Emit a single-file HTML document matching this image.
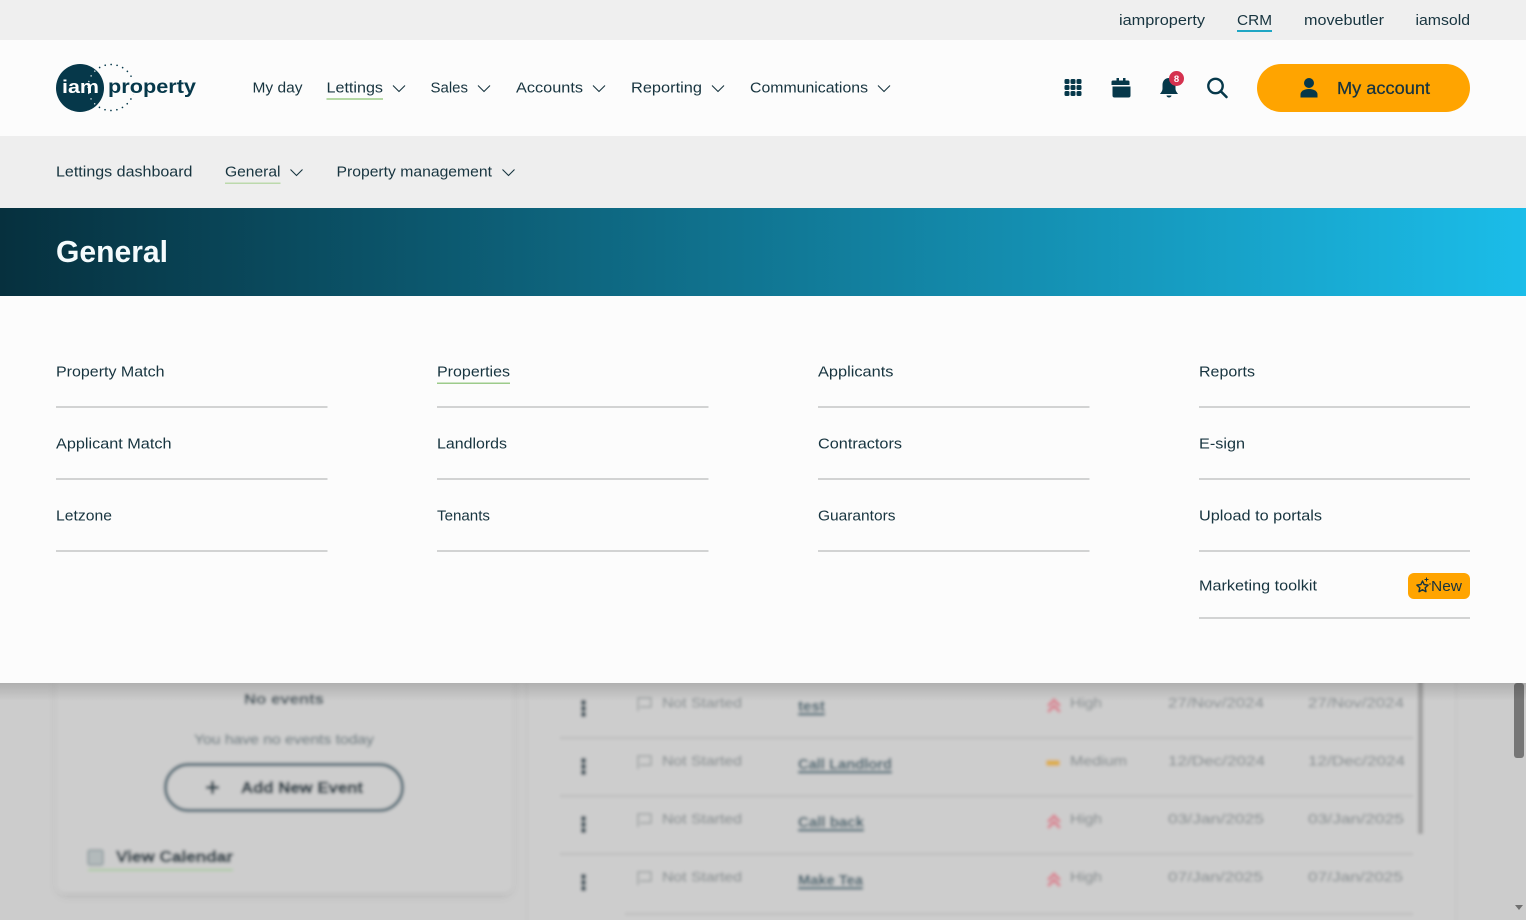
<!DOCTYPE html>
<html lang="en">
<head>
<meta charset="utf-8">
<title>General - iamproperty</title>
<style>
html,body{margin:0;padding:0;width:1526px;height:920px;overflow:hidden;background:#ccc}
svg{display:block}
text{font-family:"Liberation Sans",sans-serif;font-size:15px;fill:#17343f}
.m{font-size:15px}
.chev{fill:none;stroke:#17343f;stroke-width:1.1}
.rule{fill:#d2d3d3}
</style>
</head>
<body>
<svg width="1526" height="920" viewBox="0 0 1526 920" xmlns="http://www.w3.org/2000/svg">
<defs>
<linearGradient id="g" x1="0" x2="1" y1="0" y2="0"><stop offset="0" stop-color="#06303e"/><stop offset="1" stop-color="#1bbde9"/></linearGradient>
<linearGradient id="sh" x1="0" x2="0" y1="0" y2="1"><stop offset="0" stop-color="#000" stop-opacity=".14"/><stop offset="1" stop-color="#000" stop-opacity="0"/></linearGradient>
<filter id="b" x="-5%" y="-5%" width="110%" height="110%"><feGaussianBlur stdDeviation="1.5"/></filter>
<filter id="cs" x="-10%" y="-10%" width="120%" height="120%"><feGaussianBlur stdDeviation="5"/></filter>
<clipPath id="inC"><circle cx="80" cy="88" r="24"/></clipPath>
<clipPath id="outC"><path clip-rule="evenodd" d="M56 50h100v76H56zM56 88a24 24 0 1 0 48 0a24 24 0 1 0-48 0z"/></clipPath>
</defs>

<!-- blurred page behind the menu -->
<rect width="1526" height="920" fill="#cccccc"/>
<g filter="url(#b)">
  <rect x="58" y="660" width="453" height="235" rx="8" fill="#000" opacity=".13" filter="url(#cs)"/>
  <rect x="57" y="660" width="455" height="232" rx="8" fill="#cdcdcd"/>
  <rect x="528" y="660" width="928" height="270" fill="#cdcdcd"/>
  <rect x="1455" y="660" width="2" height="270" fill="#c6c6c6"/>
  <rect x="526" y="660" width="2" height="270" fill="#c6c6c6"/>

  <text x="244" y="704" textLength="80" lengthAdjust="spacingAndGlyphs" font-weight="700" style="font-size:15px;fill:#223f4b">No events</text>
  <text x="194" y="744" textLength="180" lengthAdjust="spacingAndGlyphs" style="font-size:14px;fill:#4f666e">You have no events today</text>
  <rect x="165.500" y="764.500" width="237" height="46" rx="23" fill="none" stroke="#4f6974" stroke-width="3.200"/>
  <path d="M206 787.500h13M212.500 781v13" stroke="#1c3d4a" stroke-width="3" fill="none"/>
  <text x="241" y="793" textLength="122" lengthAdjust="spacingAndGlyphs" font-weight="700" style="font-size:16px;fill:#15323e;stroke:#15323e;stroke-width:.5">Add New Event</text>
  <rect x="88" y="850" width="15" height="15" rx="2" fill="#b3babb" stroke="#8b9a9e" stroke-width="1.500"/>
  <text x="116" y="862" textLength="117" lengthAdjust="spacingAndGlyphs" font-weight="700" style="font-size:16px;fill:#15323e;stroke:#15323e;stroke-width:.5">View Calendar</text>
  <rect x="88" y="869" width="145" height="2" fill="#a9cb9d"/>

  <!-- table -->
  <g fill="#bcbcbc">
    <rect x="560" y="737" width="853" height="2"/>
    <rect x="560" y="795" width="853" height="2"/>
    <rect x="560" y="853" width="853" height="2"/>
    <rect x="625" y="913" width="788" height="2"/>
  </g>
  <g fill="#22434f">
    <rect x="581" y="700" width="5" height="5" rx="2"/><rect x="581" y="706" width="5" height="5" rx="2"/><rect x="581" y="712" width="5" height="5" rx="2"/>
    <rect x="581" y="758" width="5" height="5" rx="2"/><rect x="581" y="764" width="5" height="5" rx="2"/><rect x="581" y="770" width="5" height="5" rx="2"/>
    <rect x="581" y="816" width="5" height="5" rx="2"/><rect x="581" y="822" width="5" height="5" rx="2"/><rect x="581" y="828" width="5" height="5" rx="2"/>
    <rect x="581" y="874" width="5" height="5" rx="2"/><rect x="581" y="880" width="5" height="5" rx="2"/><rect x="581" y="886" width="5" height="5" rx="2"/>
  </g>
  <g fill="none" stroke="#9a9fa0" stroke-width="1.500">
    <path d="M638 711v-13h13v9h-11"/><path d="M638 769v-13h13v9h-11"/><path d="M638 827v-13h13v9h-11"/><path d="M638 885v-13h13v9h-11"/>
  </g>
  <text x="662" y="707.500" textLength="80" lengthAdjust="spacingAndGlyphs" style="font-size:14px;fill:#7c8487">Not Started</text>
  <text x="662" y="765.500" textLength="80" lengthAdjust="spacingAndGlyphs" style="font-size:14px;fill:#7c8487">Not Started</text>
  <text x="662" y="823.500" textLength="80" lengthAdjust="spacingAndGlyphs" style="font-size:14px;fill:#7c8487">Not Started</text>
  <text x="662" y="881.500" textLength="80" lengthAdjust="spacingAndGlyphs" style="font-size:14px;fill:#7c8487">Not Started</text>

  <text x="798" y="711" textLength="27" lengthAdjust="spacingAndGlyphs" font-weight="700" style="font-size:15px;fill:#1f4f5f">test</text>
  <rect x="798" y="713" width="27" height="2.500" fill="#2f6070"/>
  <text x="798" y="769" textLength="94" lengthAdjust="spacingAndGlyphs" font-weight="700" style="font-size:15px;fill:#1f4f5f">Call Landlord</text>
  <rect x="798" y="771" width="94" height="2.500" fill="#2f6070"/>
  <text x="798" y="827" textLength="66" lengthAdjust="spacingAndGlyphs" font-weight="700" style="font-size:15px;fill:#1f4f5f">Call back</text>
  <rect x="798" y="829" width="66" height="2.500" fill="#2f6070"/>
  <text x="798" y="885" textLength="65" lengthAdjust="spacingAndGlyphs" font-weight="700" style="font-size:15px;fill:#1f4f5f">Make Tea</text>
  <rect x="798" y="887" width="65" height="2.500" fill="#2f6070"/>

  <g fill="none" stroke="#d9808f" stroke-width="3">
    <path d="M1048 706l6-6 6 6M1048 712l6-6 6 6"/>
    <path d="M1048 822l6-6 6 6M1048 828l6-6 6 6"/>
    <path d="M1048 880l6-6 6 6M1048 886l6-6 6 6"/>
  </g>
  <rect x="1046" y="760" width="14" height="6" rx="2" fill="#dcae4c"/>
  <text x="1070" y="707.500" textLength="32" lengthAdjust="spacingAndGlyphs" style="font-size:14px;fill:#7c8487">High</text>
  <text x="1070" y="765.500" textLength="57" lengthAdjust="spacingAndGlyphs" style="font-size:14px;fill:#7c8487">Medium</text>
  <text x="1070" y="823.500" textLength="32" lengthAdjust="spacingAndGlyphs" style="font-size:14px;fill:#7c8487">High</text>
  <text x="1070" y="881.500" textLength="32" lengthAdjust="spacingAndGlyphs" style="font-size:14px;fill:#7c8487">High</text>

  <text x="1168" y="707.500" textLength="96" lengthAdjust="spacingAndGlyphs" style="font-size:14px;fill:#7c8487">27/Nov/2024</text>
  <text x="1308" y="707.500" textLength="96" lengthAdjust="spacingAndGlyphs" style="font-size:14px;fill:#7c8487">27/Nov/2024</text>
  <text x="1168" y="765.500" textLength="97" lengthAdjust="spacingAndGlyphs" style="font-size:14px;fill:#7c8487">12/Dec/2024</text>
  <text x="1308" y="765.500" textLength="97" lengthAdjust="spacingAndGlyphs" style="font-size:14px;fill:#7c8487">12/Dec/2024</text>
  <text x="1168" y="823.500" textLength="96" lengthAdjust="spacingAndGlyphs" style="font-size:14px;fill:#7c8487">03/Jan/2025</text>
  <text x="1308" y="823.500" textLength="96" lengthAdjust="spacingAndGlyphs" style="font-size:14px;fill:#7c8487">03/Jan/2025</text>
  <text x="1168" y="881.500" textLength="95" lengthAdjust="spacingAndGlyphs" style="font-size:14px;fill:#7c8487">07/Jan/2025</text>
  <text x="1308" y="881.500" textLength="95" lengthAdjust="spacingAndGlyphs" style="font-size:14px;fill:#7c8487">07/Jan/2025</text>

  <rect x="1418" y="670" width="5" height="164" fill="#a0a0a0"/>
</g>
<rect x="1514" y="683" width="10" height="75" rx="3" fill="#767676"/>
<path d="M1515 905h8l-4 5z" fill="#707070"/>

<!-- menu shadow -->
<rect x="0" y="683" width="1526" height="18" fill="url(#sh)"/>

<!-- panel -->
<rect width="1526" height="683" y="0" fill="#fcfcfc"/>

<!-- top utility bar -->
<rect width="1526" height="40" fill="#efefef"/>
<text x="1119" y="25" textLength="86" lengthAdjust="spacingAndGlyphs">iamproperty</text>
<text x="1237" y="25" textLength="35" lengthAdjust="spacingAndGlyphs">CRM</text>
<rect x="1237" y="30" width="35" height="2" fill="#1fa6c4"/>
<text x="1304" y="25" textLength="80" lengthAdjust="spacingAndGlyphs">movebutler</text>
<text x="1415.500" y="25" textLength="54.500" lengthAdjust="spacingAndGlyphs">iamsold</text>

<!-- logo -->
<circle cx="80" cy="88" r="24" fill="#06384a"/>
<g clip-path="url(#outC)">
  <circle cx="111" cy="87.500" r="23" fill="none" stroke="#06384a" stroke-width="1.700" stroke-linecap="round" stroke-dasharray="0 6.020"/>
</g>
<g clip-path="url(#inC)">
  <circle cx="111" cy="87.500" r="23" fill="none" stroke="#e6eef0" stroke-width="1.500" stroke-linecap="round" stroke-dasharray="0 6.020"/>
</g>
<rect x="107" y="79" width="30" height="15" fill="#fcfcfc"/>
<text x="62" y="93" textLength="37" lengthAdjust="spacingAndGlyphs" font-weight="700" style="font-size:18.500px;fill:#fff">iam</text>
<text x="108" y="93" textLength="88" lengthAdjust="spacingAndGlyphs" font-weight="700" style="font-size:19px;fill:#06384a">property</text>

<!-- main nav -->
<text x="252.500" y="92.500" textLength="50" lengthAdjust="spacingAndGlyphs" class="m">My day</text>
<text x="326.500" y="92.500" textLength="56.500" lengthAdjust="spacingAndGlyphs" class="m">Lettings</text>
<rect x="326.500" y="98" width="56.500" height="2" fill="#b5d8a4"/>
<path class="chev" d="M393 85.500l6 6 6-6"/>
<text x="430.500" y="92.500" textLength="37.500" lengthAdjust="spacingAndGlyphs" class="m">Sales</text>
<path class="chev" d="M478 85.500l6 6 6-6"/>
<text x="516" y="92.500" textLength="67" lengthAdjust="spacingAndGlyphs" class="m">Accounts</text>
<path class="chev" d="M593 85.500l6 6 6-6"/>
<text x="631" y="92.500" textLength="71" lengthAdjust="spacingAndGlyphs" class="m">Reporting</text>
<path class="chev" d="M712 85.500l6 6 6-6"/>
<text x="750" y="92.500" textLength="118" lengthAdjust="spacingAndGlyphs" class="m">Communications</text>
<path class="chev" d="M878 85.500l6 6 6-6"/>

<!-- icons -->
<g fill="#06384a">
  <rect x="1064.500" y="79" width="5" height="5" rx="1.500"/><rect x="1070.500" y="79" width="5" height="5" rx="1.500"/><rect x="1076.500" y="79" width="5" height="5" rx="1.500"/>
  <rect x="1064.500" y="85" width="5" height="5" rx="1.500"/><rect x="1070.500" y="85" width="5" height="5" rx="1.500"/><rect x="1076.500" y="85" width="5" height="5" rx="1.500"/>
  <rect x="1064.500" y="91" width="5" height="5" rx="1.500"/><rect x="1070.500" y="91" width="5" height="5" rx="1.500"/><rect x="1076.500" y="91" width="5" height="5" rx="1.500"/>
  <path d="M1114 80.500h2.500V78h2.500v2.500h4V78h2.500v2.500h2.500a1.500 1.500 0 0 1 1.500 1.500v3h-18v-3a1.500 1.500 0 0 1 1.500-1.500z"/>
  <path d="M1112.500 86.500h18v9a2 2 0 0 1-2 2h-14a2 2 0 0 1-2-2z"/>
  <path d="M1169 78c-4 0-6.500 3-6.500 7v3.500c0 2.500-1.500 4-2.500 5.500h18c-1-1.500-2.500-3-2.500-5.500V85c0-4-2.500-7-6.500-7z"/>
  <path d="M1166.500 95.500h5a2.500 2 0 0 1-5 0z"/>
</g>
<circle cx="1176.500" cy="78.500" r="7.500" fill="#d5324f"/>
<text x="1176.500" y="82" text-anchor="middle" font-weight="700" style="font-size:9.500px;fill:#fff">8</text>
<circle cx="1215.500" cy="86" r="7.200" fill="none" stroke="#06384a" stroke-width="2.400"/>
<path d="M1221 91.500l5.500 5.500" stroke="#06384a" stroke-width="2.600" stroke-linecap="round"/>

<!-- my account -->
<rect x="1257" y="64" width="213" height="48" rx="24" fill="#ffa400"/>
<circle cx="1309" cy="83" r="5" fill="#06384a"/>
<path d="M1300.500 97.500v-3c0-3 3-5.500 8.500-5.500s8.500 2.500 8.500 5.500v3z" fill="#06384a"/>
<text x="1337" y="94" textLength="93" lengthAdjust="spacingAndGlyphs" style="font-size:17.500px;fill:#17343f;stroke:#17343f;stroke-width:.25">My account</text>

<!-- sub nav -->
<rect y="136" width="1526" height="72" fill="#eeeeee"/>
<text x="56" y="176.500" textLength="136.500" lengthAdjust="spacingAndGlyphs">Lettings dashboard</text>
<text x="225" y="176.500" textLength="55.500" lengthAdjust="spacingAndGlyphs">General</text>
<rect x="225" y="182.500" width="55.500" height="1.500" fill="#bcd9ac"/>
<path class="chev" d="M290.500 169.500l6 6 6-6"/>
<text x="336.500" y="176.500" textLength="155.500" lengthAdjust="spacingAndGlyphs">Property management</text>
<path class="chev" d="M502.500 169.500l6 6 6-6"/>

<!-- banner -->
<rect y="208" width="1526" height="88" fill="url(#g)"/>
<text x="56" y="262" textLength="112" lengthAdjust="spacingAndGlyphs" font-weight="700" style="font-size:31px;fill:#f4fbfd">General</text>

<!-- menu columns -->
<text x="56" y="376.500" textLength="108.500" lengthAdjust="spacingAndGlyphs">Property Match</text>
<rect class="rule" x="56" y="406" width="271.500" height="2"/>
<text x="56" y="448.500" textLength="115.500" lengthAdjust="spacingAndGlyphs">Applicant Match</text>
<rect class="rule" x="56" y="478" width="271.500" height="2"/>
<text x="56" y="520.500" textLength="56" lengthAdjust="spacingAndGlyphs">Letzone</text>
<rect class="rule" x="56" y="550" width="271.500" height="2"/>

<text x="437" y="376.500" textLength="73" lengthAdjust="spacingAndGlyphs">Properties</text>
<rect x="437" y="382.500" width="73" height="1.500" fill="#9dcb8b"/>
<rect class="rule" x="437" y="406" width="271.500" height="2"/>
<text x="437" y="448.500" textLength="70" lengthAdjust="spacingAndGlyphs">Landlords</text>
<rect class="rule" x="437" y="478" width="271.500" height="2"/>
<text x="437" y="520.500" textLength="53" lengthAdjust="spacingAndGlyphs">Tenants</text>
<rect class="rule" x="437" y="550" width="271.500" height="2"/>

<text x="818" y="376.500" textLength="75.500" lengthAdjust="spacingAndGlyphs">Applicants</text>
<rect class="rule" x="818" y="406" width="271.500" height="2"/>
<text x="818" y="448.500" textLength="84" lengthAdjust="spacingAndGlyphs">Contractors</text>
<rect class="rule" x="818" y="478" width="271.500" height="2"/>
<text x="818" y="520.500" textLength="77.500" lengthAdjust="spacingAndGlyphs">Guarantors</text>
<rect class="rule" x="818" y="550" width="271.500" height="2"/>

<text x="1199" y="376.500" textLength="56" lengthAdjust="spacingAndGlyphs">Reports</text>
<rect class="rule" x="1199" y="406" width="271" height="2"/>
<text x="1199" y="448.500" textLength="46" lengthAdjust="spacingAndGlyphs">E-sign</text>
<rect class="rule" x="1199" y="478" width="271" height="2"/>
<text x="1199" y="520.500" textLength="123" lengthAdjust="spacingAndGlyphs">Upload to portals</text>
<rect class="rule" x="1199" y="550" width="271" height="2"/>
<text x="1199" y="590.500" textLength="118" lengthAdjust="spacingAndGlyphs">Marketing toolkit</text>
<rect class="rule" x="1199" y="617" width="271" height="2"/>

<!-- new badge -->
<rect x="1408" y="573" width="62" height="26" rx="6" fill="#ffa400"/>
<path d="M1422.500 581l1.700 3.600 3.900.5-2.900 2.700.8 3.900-3.500-1.900-3.500 1.900.8-3.900-2.900-2.700 3.900-.5z" fill="none" stroke="#17343f" stroke-width="1.400" stroke-linejoin="round"/>
<path d="M1426.500 577.500v4M1424.500 579.500h4" stroke="#17343f" stroke-width="1"/>
<circle cx="1430" cy="584" r=".7" fill="#17343f"/>
<text x="1431" y="591" textLength="31" lengthAdjust="spacingAndGlyphs">New</text>
</svg>
</body>
</html>
